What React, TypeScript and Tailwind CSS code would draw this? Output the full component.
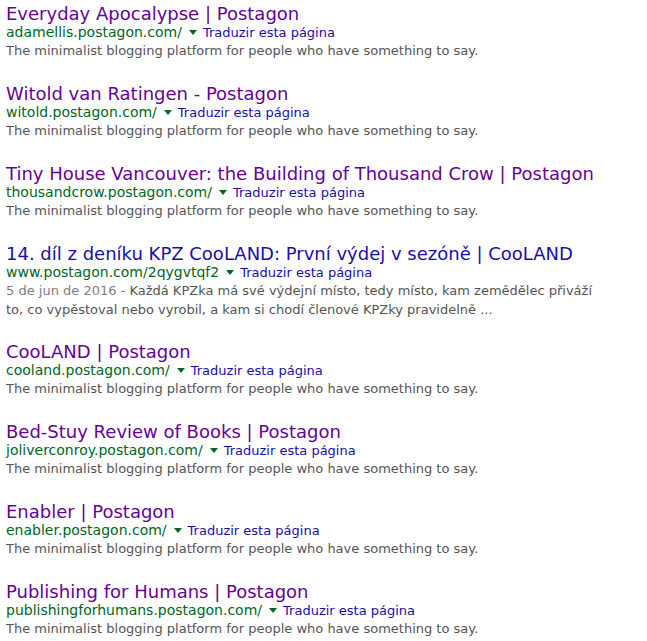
import React from 'react';

interface Result {
  title: string;
  url: string;
  visited: boolean;
  date?: string;
  snippet: string;
}

const results: Result[] = [
  { title: 'Everyday Apocalypse | Postagon', url: 'adamellis.postagon.com/', visited: true, snippet: 'The minimalist blogging platform for people who have something to say.' },
  { title: 'Witold van Ratingen - Postagon', url: 'witold.postagon.com/', visited: true, snippet: 'The minimalist blogging platform for people who have something to say.' },
  { title: 'Tiny House Vancouver: the Building of Thousand Crow | Postagon', url: 'thousandcrow.postagon.com/', visited: true, snippet: 'The minimalist blogging platform for people who have something to say.' },
  {
    title: '14. díl z deníku KPZ CooLAND: První výdej v sezóně | CooLAND',
    url: 'www.postagon.com/2qygvtqf2',
    visited: false,
    date: '5 de jun de 2016 - ',
    snippet: 'Každá KPZka má své výdejní místo, tedy místo, kam zemědělec přiváží to, co vypěstoval nebo vyrobil, a kam si chodí členové KPZky pravidelně ...',
  },
  { title: 'CooLAND | Postagon', url: 'cooland.postagon.com/', visited: true, snippet: 'The minimalist blogging platform for people who have something to say.' },
  { title: 'Bed-Stuy Review of Books | Postagon', url: 'joliverconroy.postagon.com/', visited: true, snippet: 'The minimalist blogging platform for people who have something to say.' },
  { title: 'Enabler | Postagon', url: 'enabler.postagon.com/', visited: true, snippet: 'The minimalist blogging platform for people who have something to say.' },
  { title: 'Publishing for Humans | Postagon', url: 'publishingforhumans.postagon.com/', visited: true, snippet: 'The minimalist blogging platform for people who have something to say.' },
];

export default function App() {
  return (
    <div className="bg-white min-h-screen pl-[6px] pt-[4px] font-['DejaVu_Sans',sans-serif]">
      <div className="flex flex-col gap-[24px]">
        {results.map((r) => (
          <div key={r.url} className={`w-[600px] ${r.date ? '-mb-px' : ''}`}>
            <a className={`block text-[18px] leading-[20px] whitespace-nowrap ${r.visited ? 'text-[#660099]' : 'text-[#1a0dab]'}`}>
              {r.title}
            </a>
            <div className="flex items-center leading-[17px] whitespace-nowrap">
              <span className="text-[14px] text-[#006621]">{r.url}</span>
              <span className="ml-[7px] mr-[6px] inline-block w-0 h-0 border-l-[4px] border-r-[4px] border-t-[5px] border-l-transparent border-r-transparent border-t-[#006621]" />
              <span className="text-[13px] text-[#1a0dab]">Traduzir esta página</span>
            </div>
            <div className="text-[13px] leading-[19px] text-[#545454]">
              {r.date && <span className="text-[#808080]">{r.date}</span>}
              {r.snippet}
            </div>
          </div>
        ))}
      </div>
    </div>
  );
}
